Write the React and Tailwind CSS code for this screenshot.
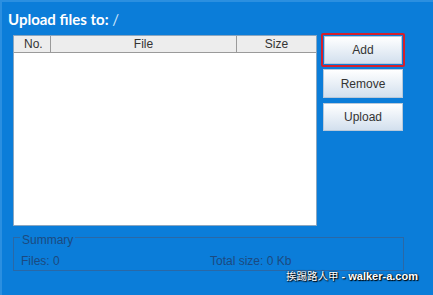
export default function App() {
  return (
    <div className="w-[433px] h-[295px] bg-[#0b7dd9] border-l-2 border-t-2 border-[#2b8fe0] relative overflow-hidden" style={{ fontFamily: '"Liberation Sans", Arial, sans-serif' }}>
      <div className="pl-[6px] pt-[8px] h-[33px] text-white text-[15px] font-bold leading-[18px]" style={{ fontFamily: 'Lato, "Noto Sans", sans-serif' }}>
        Upload files to: <span className="font-normal text-[#cfe6fb]">/</span>
      </div>
      <div className="flex gap-[4px] pl-[11px]">
        <div className="w-[304px] h-[191px] bg-white border border-[#8aa6c0] flex flex-col">
          <div className="flex h-[17px] bg-[#ededed] border-b border-[#9a9a9a] text-[12px] text-[#333] leading-[17px]">
            <div className="w-[37px] border-r border-[#9a9a9a] pl-[10px]">No.</div>
            <div className="w-[186px] border-r border-[#9a9a9a] text-center">File</div>
            <div className="flex-1 text-center">Size</div>
          </div>
        </div>
        <div className="flex flex-col w-[84px] -mt-[2px]">
          <div className="border-2 border-[#d4202c] rounded-[2px] p-px">
            <div className="h-[28px] bg-gradient-to-b from-[#ffffff] to-[#d3e0ee] flex items-center justify-center text-[12px] text-[#333] border border-[#b9c9da]">Add</div>
          </div>
          <div className="mx-[2px] mt-[2px] h-[29px] bg-gradient-to-b from-[#ffffff] to-[#d3e0ee] flex items-center justify-center text-[12px] text-[#333] border border-[#b9c9da]">Remove</div>
          <div className="mx-[2px] mt-[5px] h-[28px] bg-gradient-to-b from-[#ffffff] to-[#d3e0ee] flex items-center justify-center text-[12px] text-[#333] border border-[#b9c9da]">Upload</div>
        </div>
      </div>
      <div className="ml-[11px] mt-[11px] w-[391px] h-[34px] border border-[#2a68a6] relative">
        <div className="absolute -top-[5px] left-[6px] px-[2px] bg-[#0b7dd9] text-[12px] text-[#1b4a80] leading-[14px]">Summary</div>
        <div className="flex text-[12px] text-[#1b4a80] pt-[16px] pl-[7px] leading-[14px]">
          <div className="w-[189px]">Files: 0</div>
          <div>Total size: 0 Kb</div>
        </div>
      </div>
      <div className="absolute left-[284px] top-[267px] whitespace-nowrap text-white font-bold leading-[14px] flex items-center" style={{ fontFamily: '"Liberation Sans", "Noto Sans CJK TC", sans-serif', textShadow: '0 0 2px #000, 1px 1px 1px #000' }}>
        <span className="font-normal text-[10.5px]">挨踢路人甲</span>
        <span className="text-[11px] ml-[3px]">- walker-a.com</span>
      </div>
    </div>
  );
}
